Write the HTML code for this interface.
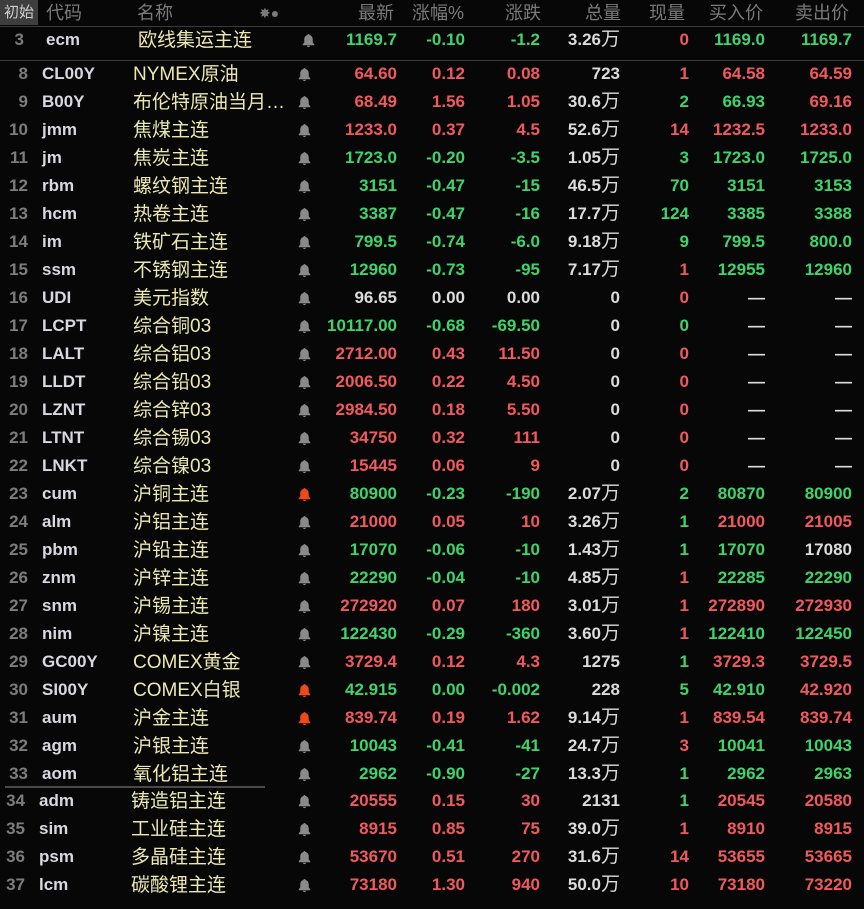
<!DOCTYPE html>
<html><head><meta charset="utf-8">
<style>
*{margin:0;padding:0;box-sizing:border-box}
body{width:864px;height:909px;background:#070707;position:relative;overflow:hidden;font-family:"Liberation Sans","Noto Sans CJK SC",sans-serif}
.hd{position:absolute;top:0;left:0;width:864px;height:27px;border-bottom:1px solid #3a3a3a}
.hd span{position:absolute;top:0;line-height:26px;font-size:18px;color:#7a7a7a;white-space:nowrap}
.row{position:absolute;left:0;width:864px;height:28px}
.row span{position:absolute;top:0;line-height:28px;height:28px;white-space:nowrap;font-weight:bold;font-size:17px}
.n{left:0;width:28px;text-align:right;color:#7c7c7c}
.c{left:42px;color:#d8d8e0}
.row span.nm{left:133px;color:#ece9b0;font-weight:normal;font-size:19px;top:1px}
.v1{left:300px;width:97px;text-align:right}
.v2{left:400px;width:65px;text-align:right}
.v3{left:470px;width:70px;text-align:right}
.v4{left:540px;width:80px;text-align:right;color:#dcdcdc}
.v4 i{font-style:normal;font-weight:normal;font-size:19px}
.v5{left:630px;width:59px;text-align:right}
.v6{left:690px;width:75px;text-align:right}
.v7{left:770px;width:82px;text-align:right}
.R{color:#f05a5c}.G{color:#3fd46b}.W{color:#dcdcdc}
.row svg{position:absolute;left:298px;top:7px;width:13px;height:15px;fill:#8a8a8a}
.row svg.o{fill:#f0481e}
.low span.n{left:-3px}.low span.c{left:39px}.low span.nm{left:131px}
</style></head><body>
<svg width="0" height="0" style="position:absolute"><defs><symbol id="bell" viewBox="0 0 12 13"><path d="M6 0.5c.6 0 1 .4 1 .9 1.8.5 2.9 2 2.9 4v2.8l1.4 1.8v.9H0.7v-.9l1.4-1.8V5.4c0-2 1.1-3.5 2.9-4 0-.5.4-.9 1-.9zM4.6 11.3h2.8c0 .8-.6 1.3-1.4 1.3s-1.4-.5-1.4-1.3z"/></symbol></defs></svg>
<div class="hd">
<div style="position:absolute;left:0;top:0;width:38px;height:25px;background:#3e3e3e"></div>
<span style="left:4px;font-size:15px;color:#d0d0d0">初始</span>
<span style="left:46px">代码</span>
<span style="left:137px">名称</span>
<span style="left:259px;font-size:14px">✸●</span>
<span style="left:358px">最新</span>
<span style="left:412px">涨幅%</span>
<span style="left:505px">涨跌</span>
<span style="left:585px">总量</span>
<span style="left:649px">现量</span>
<span style="left:709px">买入价</span>
<span style="left:795px">卖出价</span>
</div>
<div style="position:absolute;top:60px;left:0;width:864px;height:1px;background:#3a3a3a"></div>
<div style="position:absolute;top:786px;left:5px;width:260px;height:2px;background:#4a4a4a"></div>

<div class="row" style="top:26px"><span class="n" style="width:24px">3</span><span class="c" style="left:46px">ecm</span><span class="nm" style="left:138px">欧线集运主连</span><svg style="left:302px"><use href="#bell"/></svg><span class="v1 G">1169.7</span><span class="v2 G">-0.10</span><span class="v3 G">-1.2</span><span class="v4">3.26<i>万</i></span><span class="v5 R">0</span><span class="v6 G">1169.0</span><span class="v7 G">1169.7</span></div>

<div class="row" style="top:60px"><span class="n">8</span><span class="c">CL00Y</span><span class="nm">NYMEX原油</span><svg><use href="#bell"/></svg><span class="v1 R">64.60</span><span class="v2 R">0.12</span><span class="v3 R">0.08</span><span class="v4">723</span><span class="v5 R">1</span><span class="v6 R">64.58</span><span class="v7 R">64.59</span></div>
<div class="row" style="top:88px"><span class="n">9</span><span class="c">B00Y</span><span class="nm">布伦特原油当月…</span><svg><use href="#bell"/></svg><span class="v1 R">68.49</span><span class="v2 R">1.56</span><span class="v3 R">1.05</span><span class="v4">30.6<i>万</i></span><span class="v5 G">2</span><span class="v6 G">66.93</span><span class="v7 R">69.16</span></div>
<div class="row" style="top:116px"><span class="n">10</span><span class="c">jmm</span><span class="nm">焦煤主连</span><svg><use href="#bell"/></svg><span class="v1 R">1233.0</span><span class="v2 R">0.37</span><span class="v3 R">4.5</span><span class="v4">52.6<i>万</i></span><span class="v5 R">14</span><span class="v6 R">1232.5</span><span class="v7 R">1233.0</span></div>
<div class="row" style="top:144px"><span class="n">11</span><span class="c">jm</span><span class="nm">焦炭主连</span><svg><use href="#bell"/></svg><span class="v1 G">1723.0</span><span class="v2 G">-0.20</span><span class="v3 G">-3.5</span><span class="v4">1.05<i>万</i></span><span class="v5 G">3</span><span class="v6 G">1723.0</span><span class="v7 G">1725.0</span></div>
<div class="row" style="top:172px"><span class="n">12</span><span class="c">rbm</span><span class="nm">螺纹钢主连</span><svg><use href="#bell"/></svg><span class="v1 G">3151</span><span class="v2 G">-0.47</span><span class="v3 G">-15</span><span class="v4">46.5<i>万</i></span><span class="v5 G">70</span><span class="v6 G">3151</span><span class="v7 G">3153</span></div>
<div class="row" style="top:200px"><span class="n">13</span><span class="c">hcm</span><span class="nm">热卷主连</span><svg><use href="#bell"/></svg><span class="v1 G">3387</span><span class="v2 G">-0.47</span><span class="v3 G">-16</span><span class="v4">17.7<i>万</i></span><span class="v5 G">124</span><span class="v6 G">3385</span><span class="v7 G">3388</span></div>
<div class="row" style="top:228px"><span class="n">14</span><span class="c">im</span><span class="nm">铁矿石主连</span><svg><use href="#bell"/></svg><span class="v1 G">799.5</span><span class="v2 G">-0.74</span><span class="v3 G">-6.0</span><span class="v4">9.18<i>万</i></span><span class="v5 G">9</span><span class="v6 G">799.5</span><span class="v7 G">800.0</span></div>
<div class="row" style="top:256px"><span class="n">15</span><span class="c">ssm</span><span class="nm">不锈钢主连</span><svg><use href="#bell"/></svg><span class="v1 G">12960</span><span class="v2 G">-0.73</span><span class="v3 G">-95</span><span class="v4">7.17<i>万</i></span><span class="v5 R">1</span><span class="v6 G">12955</span><span class="v7 G">12960</span></div>
<div class="row" style="top:284px"><span class="n">16</span><span class="c">UDI</span><span class="nm">美元指数</span><svg><use href="#bell"/></svg><span class="v1 W">96.65</span><span class="v2 W">0.00</span><span class="v3 W">0.00</span><span class="v4">0</span><span class="v5 R">0</span><span class="v6 W">—</span><span class="v7 W">—</span></div>
<div class="row" style="top:312px"><span class="n">17</span><span class="c">LCPT</span><span class="nm">综合铜03</span><svg><use href="#bell"/></svg><span class="v1 G">10117.00</span><span class="v2 G">-0.68</span><span class="v3 G">-69.50</span><span class="v4">0</span><span class="v5 G">0</span><span class="v6 W">—</span><span class="v7 W">—</span></div>
<div class="row" style="top:340px"><span class="n">18</span><span class="c">LALT</span><span class="nm">综合铝03</span><svg><use href="#bell"/></svg><span class="v1 R">2712.00</span><span class="v2 R">0.43</span><span class="v3 R">11.50</span><span class="v4">0</span><span class="v5 R">0</span><span class="v6 W">—</span><span class="v7 W">—</span></div>
<div class="row" style="top:368px"><span class="n">19</span><span class="c">LLDT</span><span class="nm">综合铅03</span><svg><use href="#bell"/></svg><span class="v1 R">2006.50</span><span class="v2 R">0.22</span><span class="v3 R">4.50</span><span class="v4">0</span><span class="v5 R">0</span><span class="v6 W">—</span><span class="v7 W">—</span></div>
<div class="row" style="top:396px"><span class="n">20</span><span class="c">LZNT</span><span class="nm">综合锌03</span><svg><use href="#bell"/></svg><span class="v1 R">2984.50</span><span class="v2 R">0.18</span><span class="v3 R">5.50</span><span class="v4">0</span><span class="v5 R">0</span><span class="v6 W">—</span><span class="v7 W">—</span></div>
<div class="row" style="top:424px"><span class="n">21</span><span class="c">LTNT</span><span class="nm">综合锡03</span><svg><use href="#bell"/></svg><span class="v1 R">34750</span><span class="v2 R">0.32</span><span class="v3 R">111</span><span class="v4">0</span><span class="v5 R">0</span><span class="v6 W">—</span><span class="v7 W">—</span></div>
<div class="row" style="top:452px"><span class="n">22</span><span class="c">LNKT</span><span class="nm">综合镍03</span><svg><use href="#bell"/></svg><span class="v1 R">15445</span><span class="v2 R">0.06</span><span class="v3 R">9</span><span class="v4">0</span><span class="v5 R">0</span><span class="v6 W">—</span><span class="v7 W">—</span></div>
<div class="row" style="top:480px"><span class="n">23</span><span class="c">cum</span><span class="nm">沪铜主连</span><svg class="o"><use href="#bell"/></svg><span class="v1 G">80900</span><span class="v2 G">-0.23</span><span class="v3 G">-190</span><span class="v4">2.07<i>万</i></span><span class="v5 G">2</span><span class="v6 G">80870</span><span class="v7 G">80900</span></div>
<div class="row" style="top:508px"><span class="n">24</span><span class="c">alm</span><span class="nm">沪铝主连</span><svg><use href="#bell"/></svg><span class="v1 R">21000</span><span class="v2 R">0.05</span><span class="v3 R">10</span><span class="v4">3.26<i>万</i></span><span class="v5 G">1</span><span class="v6 R">21000</span><span class="v7 R">21005</span></div>
<div class="row" style="top:536px"><span class="n">25</span><span class="c">pbm</span><span class="nm">沪铅主连</span><svg><use href="#bell"/></svg><span class="v1 G">17070</span><span class="v2 G">-0.06</span><span class="v3 G">-10</span><span class="v4">1.43<i>万</i></span><span class="v5 G">1</span><span class="v6 G">17070</span><span class="v7 W">17080</span></div>
<div class="row" style="top:564px"><span class="n">26</span><span class="c">znm</span><span class="nm">沪锌主连</span><svg><use href="#bell"/></svg><span class="v1 G">22290</span><span class="v2 G">-0.04</span><span class="v3 G">-10</span><span class="v4">4.85<i>万</i></span><span class="v5 R">1</span><span class="v6 G">22285</span><span class="v7 G">22290</span></div>
<div class="row" style="top:592px"><span class="n">27</span><span class="c">snm</span><span class="nm">沪锡主连</span><svg><use href="#bell"/></svg><span class="v1 R">272920</span><span class="v2 R">0.07</span><span class="v3 R">180</span><span class="v4">3.01<i>万</i></span><span class="v5 R">1</span><span class="v6 R">272890</span><span class="v7 R">272930</span></div>
<div class="row" style="top:620px"><span class="n">28</span><span class="c">nim</span><span class="nm">沪镍主连</span><svg><use href="#bell"/></svg><span class="v1 G">122430</span><span class="v2 G">-0.29</span><span class="v3 G">-360</span><span class="v4">3.60<i>万</i></span><span class="v5 R">1</span><span class="v6 G">122410</span><span class="v7 G">122450</span></div>
<div class="row" style="top:648px"><span class="n">29</span><span class="c">GC00Y</span><span class="nm">COMEX黄金</span><svg><use href="#bell"/></svg><span class="v1 R">3729.4</span><span class="v2 R">0.12</span><span class="v3 R">4.3</span><span class="v4">1275</span><span class="v5 G">1</span><span class="v6 R">3729.3</span><span class="v7 R">3729.5</span></div>
<div class="row" style="top:676px"><span class="n">30</span><span class="c">SI00Y</span><span class="nm">COMEX白银</span><svg class="o"><use href="#bell"/></svg><span class="v1 G">42.915</span><span class="v2 G">0.00</span><span class="v3 G">-0.002</span><span class="v4">228</span><span class="v5 G">5</span><span class="v6 G">42.910</span><span class="v7 R">42.920</span></div>
<div class="row" style="top:704px"><span class="n">31</span><span class="c">aum</span><span class="nm">沪金主连</span><svg class="o"><use href="#bell"/></svg><span class="v1 R">839.74</span><span class="v2 R">0.19</span><span class="v3 R">1.62</span><span class="v4">9.14<i>万</i></span><span class="v5 R">1</span><span class="v6 R">839.54</span><span class="v7 R">839.74</span></div>
<div class="row" style="top:732px"><span class="n">32</span><span class="c">agm</span><span class="nm">沪银主连</span><svg><use href="#bell"/></svg><span class="v1 G">10043</span><span class="v2 G">-0.41</span><span class="v3 G">-41</span><span class="v4">24.7<i>万</i></span><span class="v5 R">3</span><span class="v6 G">10041</span><span class="v7 G">10043</span></div>
<div class="row" style="top:760px"><span class="n">33</span><span class="c">aom</span><span class="nm">氧化铝主连</span><svg><use href="#bell"/></svg><span class="v1 G">2962</span><span class="v2 G">-0.90</span><span class="v3 G">-27</span><span class="v4">13.3<i>万</i></span><span class="v5 G">1</span><span class="v6 G">2962</span><span class="v7 G">2963</span></div>
<div class="row low" style="top:787px"><span class="n">34</span><span class="c">adm</span><span class="nm">铸造铝主连</span><svg><use href="#bell"/></svg><span class="v1 R">20555</span><span class="v2 R">0.15</span><span class="v3 R">30</span><span class="v4">2131</span><span class="v5 G">1</span><span class="v6 R">20545</span><span class="v7 R">20580</span></div>
<div class="row low" style="top:815px"><span class="n">35</span><span class="c">sim</span><span class="nm">工业硅主连</span><svg><use href="#bell"/></svg><span class="v1 R">8915</span><span class="v2 R">0.85</span><span class="v3 R">75</span><span class="v4">39.0<i>万</i></span><span class="v5 R">1</span><span class="v6 R">8910</span><span class="v7 R">8915</span></div>
<div class="row low" style="top:843px"><span class="n">36</span><span class="c">psm</span><span class="nm">多晶硅主连</span><svg><use href="#bell"/></svg><span class="v1 R">53670</span><span class="v2 R">0.51</span><span class="v3 R">270</span><span class="v4">31.6<i>万</i></span><span class="v5 R">14</span><span class="v6 R">53655</span><span class="v7 R">53665</span></div>
<div class="row low" style="top:871px"><span class="n">37</span><span class="c">lcm</span><span class="nm">碳酸锂主连</span><svg><use href="#bell"/></svg><span class="v1 R">73180</span><span class="v2 R">1.30</span><span class="v3 R">940</span><span class="v4">50.0<i>万</i></span><span class="v5 R">10</span><span class="v6 R">73180</span><span class="v7 R">73220</span></div>
</body></html>
